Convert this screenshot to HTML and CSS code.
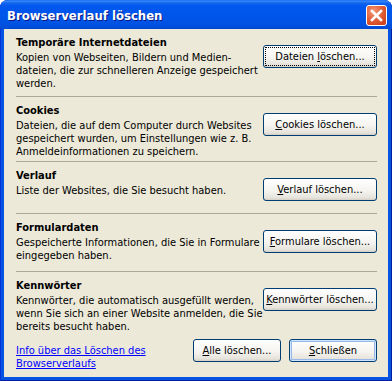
FILE: index.html
```html
<!DOCTYPE html>
<html lang="de">

<head>
    <meta charset="UTF-8">
    <title>Browserverlauf löschen</title>
    <link rel="stylesheet" href="styles.css">
</head>

<body>

    <div class="window">

        <!-- Title bar -->
        <div class="titlebar">
            <span class="title">Browserverlauf löschen</span>
            <span class="close-btn">
                <svg width="13" height="13" viewBox="0 0 13 13">
                    <path d="M2 2 L11 11 M11 2 L2 11" stroke="#fff" stroke-width="2.6" stroke-linecap="square" />
                </svg>
            </span>
        </div>

        <div class="content">

            <div class="group group-temp">
                <div class="group-text">
                    <h2>Temporäre Internetdateien</h2>
                    <p>Kopien von Webseiten, Bildern und Medien-<br>dateien, die zur schnelleren Anzeige gespeichert<br>werden.</p>
                </div>
                <button class="btn btn-focus">Dateien <u>l</u>öschen...</button>
            </div>

            <div class="group group-cookies">
                <div class="group-text">
                    <h2>Cookies</h2>
                    <p>Dateien, die auf dem Computer durch Websites<br>gespeichert wurden, um Einstellungen wie z. B.<br>Anmeldeinformationen zu speichern.</p>
                </div>
                <button class="btn"><u>C</u>ookies löschen...</button>
            </div>

            <div class="group group-history">
                <div class="group-text">
                    <h2>Verlauf</h2>
                    <p>Liste der Websites, die Sie besucht haben.</p>
                </div>
                <button class="btn"><u>V</u>erlauf löschen...</button>
            </div>

            <div class="group group-forms">
                <div class="group-text">
                    <h2>Formulardaten</h2>
                    <p>Gespeicherte Informationen, die Sie in Formulare<br>eingegeben haben.</p>
                </div>
                <button class="btn"><u>F</u>ormulare löschen...</button>
            </div>

            <div class="group group-passwords">
                <div class="group-text">
                    <h2>Kennwörter</h2>
                    <p>Kennwörter, die automatisch ausgefüllt werden,<br>wenn Sie sich an einer Website anmelden, die Sie<br>bereits besucht haben.</p>
                </div>
                <button class="btn"><u>K</u>ennwörter löschen...</button>
            </div>

            <!-- Footer -->
            <div class="footer">
                <a class="help-link" href="#">Info über das Löschen des <br>Browserverlaufs</a>
                <div class="actions">
                    <button class="btn btn-small"><u>A</u>lle löschen...</button>
                    <button class="btn btn-small btn-default"><u>S</u>chließen</button>
                </div>
            </div>

        </div>
    </div>

</body>

</html>
```

FILE: styles.css
```css
/* General Styling */
body {
    margin: 0;
    padding: 0;
    font-family: "DejaVu Sans Condensed", "DejaVu Sans", sans-serif;
    font-size: 11px;
    color: #000;
}

/* Window frame */
.window {
    width: 392px;
    height: 381px;
    display: flex;
    flex-direction: column;
    background-color: #0553e1;
    border-radius: 8px 8px 0 0;
    box-shadow: inset 1px 0 #0831d9, inset -1px 0 #001ea0, inset 0 -1px #001ea0;
}

/* Title bar */
.titlebar {
    height: 29px;
    display: flex;
    align-items: center;
    justify-content: space-between;
    padding: 0 5px 0 7px;
    border-radius: 8px 8px 0 0;
    background: linear-gradient(#0a61ff 0, #3b8cf5 1px, #1566ee 3px, #0058ee 6px, #0055ea 16px, #0053e4 22px, #004fdc 27px, #0047d0 29px);
}

.title {
    color: white;
    font-weight: bold;
    font-size: 13px;
    text-shadow: 1px 1px #0a1883;
    padding-top: 1px;
}

.close-btn {
    width: 19px;
    height: 19px;
    margin-top: 2px;
    display: flex;
    align-items: center;
    justify-content: center;
    border: 1px solid white;
    border-radius: 3px;
    background: radial-gradient(circle at 35% 30%, #f19a7c, #e2613a 45%, #c8380f);
}

/* Dialog body */
.content {
    flex: 1;
    margin: 0 4px 4px;
    padding: 0 11px 0 12px;
    background-color: #ece9d8;
}

.group {
    display: flex;
    justify-content: space-between;
    align-items: flex-start;
    box-sizing: border-box;
    padding-top: 7px;
    border-bottom: 1px solid #aca899;
}

.group-temp { height: 68px; }
.group-cookies { height: 65px; }
.group-history { height: 52px; }
.group-forms { height: 58px; }

.group-passwords {
    height: 60px;
    border-bottom: none;
}

.group-text h2 {
    margin: 0;
    font-size: 11px;
    line-height: 13px;
    font-weight: bold;
}

.group-text p {
    margin: 2px 0 0;
    line-height: 13px;
    white-space: nowrap;
}

/* Buttons */
.btn {
    width: 114px;
    height: 23px;
    margin-top: 9px;
    padding: 0;
    font: inherit;
    color: #000;
    border: 1px solid #003c74;
    border-radius: 3px;
    background: linear-gradient(#ffffff, #f5f4f0 55%, #e6e4dc 88%, #d6d0c5);
    flex-shrink: 0;
}

.btn u {
    text-decoration: underline;
}

.btn-focus {
    outline: 1px dotted #000;
    outline-offset: -3px;
}

.btn-default {
    box-shadow: inset 0 0 0 1px #cee7ff, inset 0 0 0 2px #98b8ea;
}

.btn-small {
    width: 88px;
    margin-top: 0;
}

/* Footer */
.footer {
    display: flex;
    justify-content: space-between;
    align-items: flex-start;
    padding-top: 7px;
}

.help-link {
    margin-top: 5px;
    color: #0000ff;
    line-height: 13px;
}

.actions {
    display: flex;
    gap: 8px;
}
```
